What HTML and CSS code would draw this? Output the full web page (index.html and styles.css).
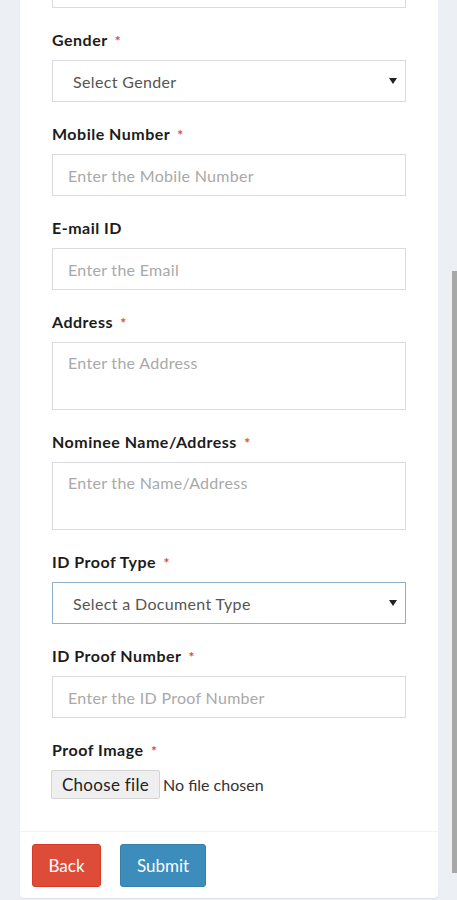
FILE: index.html
```html
<!DOCTYPE html>
<html>
<head>
<meta charset="utf-8">
<link rel="stylesheet" href="styles.css">
</head>
<body>
<div class="page">
  <div class="card">
    <div class="card-body">
      <div class="group">
        <input class="control" type="text">
      </div>
      <div class="group">
        <label class="label">Gender <span class="req">*</span></label>
        <div class="select">Select Gender<span class="caret"></span></div>
      </div>
      <div class="group">
        <label class="label">Mobile Number <span class="req">*</span></label>
        <input class="control" type="text" placeholder="Enter the Mobile Number">
      </div>
      <div class="group">
        <label class="label">E-mail ID</label>
        <input class="control" type="text" placeholder="Enter the Email">
      </div>
      <div class="group">
        <label class="label">Address <span class="req">*</span></label>
        <textarea class="control area" placeholder="Enter the Address"></textarea>
      </div>
      <div class="group">
        <label class="label">Nominee Name/Address <span class="req">*</span></label>
        <textarea class="control area" placeholder="Enter the Name/Address"></textarea>
      </div>
      <div class="group">
        <label class="label">ID Proof Type <span class="req">*</span></label>
        <div class="select focus">Select a Document Type<span class="caret"></span></div>
      </div>
      <div class="group">
        <label class="label">ID Proof Number <span class="req">*</span></label>
        <input class="control" type="text" placeholder="Enter the ID Proof Number">
      </div>
      <div class="group last">
        <label class="label">Proof Image <span class="req">*</span></label>
        <div class="file">
          <span class="file-btn">Choose file</span>
          <span class="file-name">No file chosen</span>
        </div>
      </div>
    </div>
    <div class="card-footer">
      <button class="btn btn-back">Back</button>
      <button class="btn btn-submit">Submit</button>
    </div>
  </div>
</div>
<div class="scrollbar"></div>
</body>
</html>
```
FILE: styles.css
```css
html, body {
  margin: 0;
  padding: 0;
}
body {
  background: #ecf0f5;
  font-family: Lato, "Open Sans", sans-serif;
  overflow: hidden;
  height: 900px;
}
.page {
  padding: 0 19px 0 20px;
}
.card {
  background: #fff;
  margin-top: -34px;
  border-radius: 0 0 4px 4px;
  box-shadow: 0 1px 1px rgba(0,0,0,0.06);
}
.card-body {
  padding: 0 32px 32px 32px;
}
.group {
  margin-bottom: 22px;
}
.group.last {
  margin-bottom: 0;
}
.label {
  display: block;
  font-size: 16px;
  font-weight: 700;
  letter-spacing: 0.5px;
  line-height: 20px;
  color: #1c1c1c;
  margin-bottom: 10px;
}
.req {
  color: #dd4b39;
  margin-left: 3px;
  font-size: 14px;
  line-height: 1;
}
.control {
  display: block;
  box-sizing: border-box;
  width: 100%;
  height: 42px;
  margin: 0;
  border: 1px solid #d8dbe0;
  border-radius: 0;
  padding: 0 15px;
  font-family: Lato, "Open Sans", sans-serif;
  font-size: 16px;
  letter-spacing: 0.3px;
  color: #555;
  background: #fff;
  outline: none;
}
.control::placeholder {
  color: #a9a9a9;
}
.area {
  height: 68px;
  padding-top: 10px;
  resize: none;
}
.select {
  box-sizing: border-box;
  height: 42px;
  border: 1px solid #d8dbe0;
  display: flex;
  align-items: center;
  justify-content: space-between;
  padding: 0 8px 0 20px;
  font-size: 16px;
  letter-spacing: 0.35px;
  color: #555;
}
.select.focus {
  border-color: #8fb2cc;
}
.caret {
  width: 0;
  height: 0;
  border-left: 4px solid transparent;
  border-right: 4px solid transparent;
  border-top: 6px solid #222;
}
.file {
  display: flex;
  align-items: center;
}
.file-btn {
  box-sizing: border-box;
  height: 29px;
  width: 109px;
  display: flex;
  align-items: center;
  justify-content: center;
  background: #efefef;
  border: 1px solid #d4d4d4;
  border-radius: 2px;
  font-size: 17px;
  letter-spacing: 0.3px;
  color: #222;
  margin-left: -1px;
}
.file-name {
  margin-left: 3px;
  font-size: 16px;
  color: #333;
}
.card-footer {
  border-top: 1px solid #f2f2f2;
  padding: 12px 12px 11px 12px;
  display: flex;
  gap: 19px;
}
.btn {
  box-sizing: border-box;
  height: 43px;
  border-radius: 3px;
  font-family: Lato, "Open Sans", sans-serif;
  font-size: 17px;
  color: #fff;
  padding: 0;
  margin: 0;
}
.btn-back {
  width: 69px;
  background: #dd4b39;
  border: 1px solid #d73925;
}
.btn-submit {
  width: 86px;
  background: #3c8dbc;
  border: 1px solid #367fa9;
}
.scrollbar {
  position: fixed;
  left: 452px;
  top: 271px;
  width: 5px;
  height: 602px;
  background: #a8a8a8;
}
```
